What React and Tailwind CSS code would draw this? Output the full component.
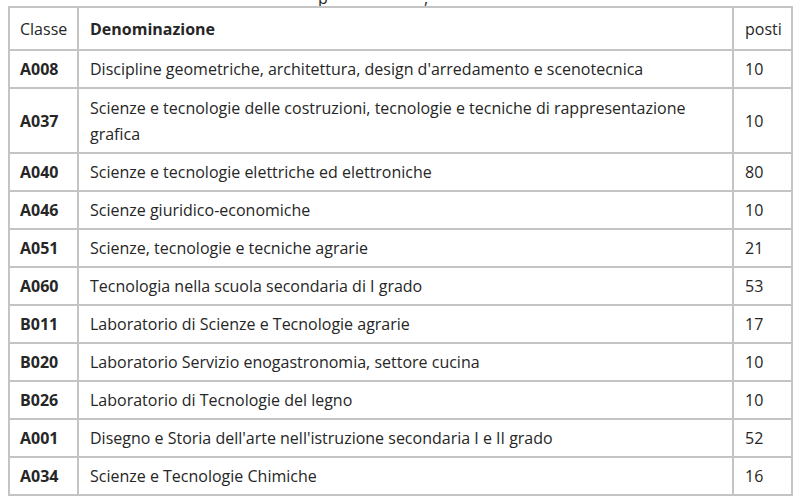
const rows = [
  ["A008", "Discipline geometriche, architettura, design d'arredamento e scenotecnica", "10"],
  ["A037", "Scienze e tecnologie delle costruzioni, tecnologie e tecniche di rappresentazione grafica", "10"],
  ["A040", "Scienze e tecnologie elettriche ed elettroniche", "80"],
  ["A046", "Scienze giuridico-economiche", "10"],
  ["A051", "Scienze, tecnologie e tecniche agrarie", "21"],
  ["A060", "Tecnologia nella scuola secondaria di I grado", "53"],
  ["B011", "Laboratorio di Scienze e Tecnologie agrarie", "17"],
  ["B020", "Laboratorio Servizio enogastronomia, settore cucina", "10"],
  ["B026", "Laboratorio di Tecnologie del legno", "10"],
  ["A001", "Disegno e Storia dell'arte nell'istruzione secondaria I e II grado", "52"],
  ["A034", "Scienze e Tecnologie Chimiche", "16"],
];

export default function App() {
  return (
    <div
      className="h-[502px] w-[800px] overflow-hidden bg-white text-[16px] leading-[26px] text-[#262626]"
      style={{ fontFamily: "'Open Sans', Lato, sans-serif" }}
    >
      {/* tail of the heading line cut off above */}
      <div className="relative h-[6px] overflow-hidden">
        <span className="absolute left-[318px] top-[-15px]">p</span>
        <span className="absolute left-[424px] top-[-15px]">,</span>
      </div>
      <table className="ml-[8px] w-[783px] table-fixed border-collapse">
        <colgroup>
          <col className="w-[69px]" />
          <col className="w-[655px]" />
          <col className="w-[59px]" />
        </colgroup>
        <thead>
          <tr className="h-[43px]">
            <th className="border-2 border-[#c4c4c4] px-[10px] py-0 text-left font-normal">Classe</th>
            <th className="border-2 border-[#c4c4c4] px-[11px] py-0 text-left font-bold">Denominazione</th>
            <th className="border-2 border-[#c4c4c4] px-[11px] py-0 text-left font-normal">posti</th>
          </tr>
        </thead>
        <tbody>
          {rows.map(([code, name, posti]) => (
            <tr key={code} className={code === "A037" ? "h-[65px]" : "h-[38px]"}>
              <td className="border-2 border-[#c4c4c4] px-[10px] py-0 align-middle font-bold">{code}</td>
              <td className="border-2 border-[#c4c4c4] py-0 pl-[11px] pr-[20px] align-middle">{name}</td>
              <td className="border-2 border-[#c4c4c4] px-[11px] py-0 align-middle">{posti}</td>
            </tr>
          ))}
        </tbody>
      </table>
    </div>
  );
}
